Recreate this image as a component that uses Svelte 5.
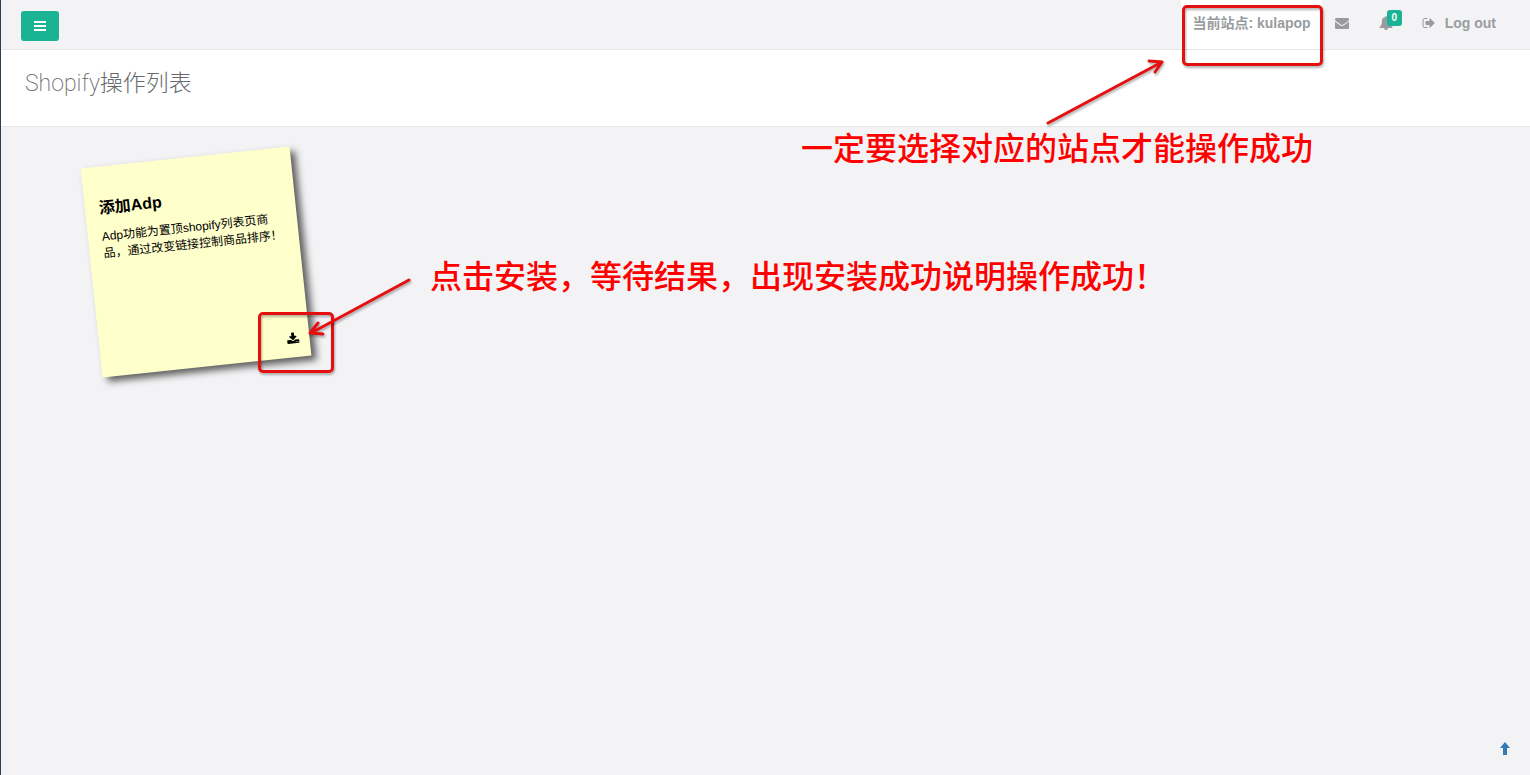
<script>
  let { site = 'kulapop', alerts = 0 } = $props()

  const notes = [
    {
      title: '添加Adp',
      text: 'Adp功能为置顶shopify列表页商品，通过改变链接控制商品排序！'
    }
  ]
</script>

<div class="wrapper">
  <nav>
    <button class="toggle" type="button" aria-label="Toggle menu">
      <svg width="12" height="10" viewBox="0 0 12 10" fill="currentColor">
        <path d="M0 0h12v2H0zM0 4h12v2H0zM0 8h12v2H0z" />
      </svg>
    </button>

    <ul class="links">
      <li class="site"><button type="button">当前站点: {site}</button></li>
      <li class="mail">
        <a href="#mail" aria-label="Mail">
          <svg width="14" height="14" viewBox="0 0 1792 1792" fill="currentColor">
            <path d="M1792 710v794q0 66-47 113t-113 47h-1472q-66 0-113-47t-47-113v-794q44 49 101 87 362 246 497 345 57 42 92.5 65.5t94.5 48 110 24.5h2q51 0 110-24.5t94.5-48 92.5-65.5q170-123 498-345 57-39 100-87zm0-294q0 79-49 151t-122 123q-376 261-468 325-10 7-42.5 31t-54 38.5-52 32.5-57.5 27-50 9h-2q-23 0-50-9t-57.5-27-52-32.5-54-38.5-42.5-31q-91-64-262-182.5t-205-142.5q-62-42-117-115.5t-55-136.5q0-78 41.5-130t118.5-52h1472q65 0 112.5 47t47.5 113z" />
          </svg>
        </a>
      </li>
      <li class="bell">
        <a href="#alerts" aria-label="Alerts">
          <svg width="14" height="14" viewBox="0 0 1792 1792" fill="currentColor">
            <path d="M912 1696q0-16-16-16-59 0-101.5-42.5t-42.5-101.5q0-16-16-16t-16 16q0 73 51.5 124.5t124.5 51.5q16 0 16-16zm816-288q0 52-38 90t-90 38h-448q0 106-75 181t-181 75-181-75-75-181h-448q-52 0-90-38t-38-90q50-42 91-88t85-119.5 74.5-158.5 50-206 19.5-260q0-152 117-282.5t307-158.5q-8-19-8-39 0-40 28-68t68-28 68 28 28 68q0 20-8 39 190 28 307 158.5t117 282.5q0 139 19.5 260t50 206 74.5 158.5 85 119.5 91 88z" />
          </svg>
          <span class="badge">{alerts}</span>
        </a>
      </li>
      <li class="logout">
        <a href="#logout">
          <svg width="13" height="14" viewBox="0 0 1664 1792" fill="currentColor">
            <path d="M704 1440q0 4 1 20t.5 26.5-3 23.5-10 19.5-20.5 6.5h-320q-119 0-203.5-84.5t-84.5-203.5v-704q0-119 84.5-203.5t203.5-84.5h320q13 0 22.5 9.5t9.5 22.5q0 4 1 20t.5 26.5-3 23.5-10 19.5-20.5 6.5h-320q-66 0-113 47t-47 113v704q0 66 47 113t113 47h312l11.5 1 11.5 3 8 5.5 7 9 2 13.5zm928-544q0 26-19 45l-544 544q-19 19-45 19t-45-19-19-45v-288h-448q-26 0-45-19t-19-45v-384q0-26 19-45t45-19h448v-288q0-26 19-45t45-19 45 19l544 544q19 19 19 45z" />
          </svg>
          Log out
        </a>
      </li>
    </ul>
  </nav>

  <header>
    <h1>Shopify操作列表</h1>
  </header>

  <ul class="notes">
    {#each notes as note}
      <li>
        <h2>{note.title}</h2>
        <p>{note.text}</p>
        <button type="button" aria-label="Install">
          <svg width="13" height="13" viewBox="0 0 1792 1792" fill="currentColor">
            <path d="M1344 1344q0-26-19-45t-45-19-45 19-19 45 19 45 45 19 45-19 19-45zm256 0q0-26-19-45t-45-19-45 19-19 45 19 45 45 19 45-19 19-45zm128-224v320q0 40-28 68t-68 28h-1472q-40 0-68-28t-28-68v-320q0-40 28-68t68-28h465l135 136q58 56 136 56t136-56l136-136h464q40 0 68 28t28 68zm-325-569q17 41-14 70l-448 448q-18 19-45 19t-45-19l-448-448q-31-29-14-70 17-39 59-39h256v-448q0-26 19-45t45-19h256q26 0 45 19t19 45v448h256q42 0 59 39z" />
          </svg>
        </button>
      </li>
    {/each}
  </ul>

  <a class="top" href="#top" aria-label="Back to top">
    <svg width="10" height="13" viewBox="0 0 10 13" fill="currentColor">
      <path d="M5 0l5 6H7v7H3V6H0z" />
    </svg>
  </a>

  <!-- help marks, drawn over the page -->
  <div class="mark install-mark"></div>
  <svg class="arrow install-arrow" width="110" height="70" viewBox="0 0 110 70">
    <path d="M106 9L8 62M15 52L7 62L20 63" />
  </svg>
  <p class="hint install-hint">点击安装，等待结果，出现安装成功说明操作成功！</p>

  <div class="mark site-mark"></div>
  <svg class="arrow site-arrow" width="130" height="80" viewBox="0 0 130 80">
    <path d="M8 72L122 11M109 10L122 11L115 21" />
  </svg>
  <p class="hint site-hint">一定要选择对应的站点才能操作成功</p>
</div>

<style>
  :global(body) {
    margin: 0;
    background: #f3f3f5;
  }

  .wrapper {
    position: relative;
    display: flex;
    flex-direction: column;
    box-sizing: border-box;
    min-height: 100vh;
    overflow: hidden;
    border-left: 1px solid #2f4050;
    font-family: "Liberation Sans", "Noto Sans CJK SC", sans-serif;
    font-size: 14px;
    color: #676a6c;
  }

  ul {
    margin: 0;
    padding: 0;
    list-style: none;
  }

  button {
    border: 0;
    padding: 0;
    background: none;
    font: inherit;
    color: inherit;
    cursor: pointer;
  }

  nav {
    display: flex;
    justify-content: space-between;
    height: 49px;
    border-bottom: 1px solid #e5e6e9;
  }

  .toggle {
    display: flex;
    align-items: center;
    justify-content: center;
    width: 38px;
    height: 30px;
    margin: 11px 0 0 20px;
    border-radius: 3px;
    background: #1ab394;
    color: white;
  }

  .links {
    display: flex;
    padding-right: 34px;
    font-weight: bold;
    line-height: 20px;
    color: #999c9e;
  }

  .links li {
    display: flex;
    align-items: flex-start;
  }

  .links a {
    display: flex;
    align-items: center;
    height: 20px;
    margin-top: 13px;
    color: inherit;
    text-decoration: none;
  }

  .site {
    background: white;
  }

  .site button {
    padding: 13px 11px 16px;
    line-height: 20px;
  }

  .mail {
    padding: 0 30px 0 13px;
  }

  .bell {
    padding-right: 29px;
  }

  .bell a {
    position: relative;
  }

  .badge {
    position: absolute;
    top: -3px;
    left: 8px;
    width: 15px;
    height: 16px;
    border-radius: 3px;
    background: #1ab394;
    font-size: 10px;
    line-height: 16px;
    text-align: center;
    color: white;
  }

  .logout a {
    gap: 10px;
  }

  header {
    padding: 16px 24px 24px;
    border-bottom: 1px solid #e5e6e9;
    background: white;
  }

  h1 {
    margin: 0;
    font-family: Roboto, "Noto Sans CJK SC", sans-serif;
    font-size: 23px;
    font-weight: 200;
    line-height: 36px;
  }

  .notes {
    display: flex;
    flex-wrap: wrap;
    padding: 30px 90px;
  }

  .notes li {
    display: flex;
    flex-direction: column;
    box-sizing: border-box;
    width: 210px;
    height: 210px;
    padding: 32px 14px 8px;
    background: #ffc;
    box-shadow: 5px 5px 7px rgba(33, 33, 33, 0.7);
    color: black;
    transform: rotate(-6deg);
  }

  h2 {
    margin: 0 0 10px;
    font-size: 16px;
    line-height: 20px;
  }

  .notes p {
    margin: 0;
    font-size: 12px;
    line-height: 17px;
  }

  .notes button {
    display: flex;
    align-self: flex-end;
    margin: auto -4px 0 0;
    padding: 4px 0;
  }

  .top {
    display: flex;
    align-self: flex-end;
    margin: auto 20px 20px 0;
    color: #337ab7;
  }

  .mark {
    position: absolute;
    box-sizing: border-box;
    border: 3px solid #e60f0f;
    border-radius: 5px;
    filter: drop-shadow(1px 2px 1px rgba(0, 0, 0, 0.3));
    pointer-events: none;
  }

  .arrow {
    position: absolute;
    fill: none;
    stroke: #e60f0f;
    stroke-width: 3;
    stroke-linecap: round;
    stroke-linejoin: round;
    filter: drop-shadow(1px 2px 1px rgba(0, 0, 0, 0.3));
    pointer-events: none;
  }

  .hint {
    position: absolute;
    margin: 0;
    font-family: "Noto Sans CJK SC", sans-serif;
    font-size: 32px;
    font-weight: 500;
    line-height: 40px;
    white-space: nowrap;
    color: #f00;
  }

  .install-mark {
    top: 312px;
    left: 257px;
    width: 76px;
    height: 61px;
  }

  .install-arrow {
    top: 271px;
    left: 302px;
  }

  .install-hint {
    top: 254px;
    left: 429px;
  }

  .site-mark {
    top: 5px;
    right: 207px;
    width: 141px;
    height: 61px;
  }

  .site-arrow {
    top: 51px;
    right: 360px;
  }

  .site-hint {
    top: 126px;
    right: 217px;
  }
</style>
